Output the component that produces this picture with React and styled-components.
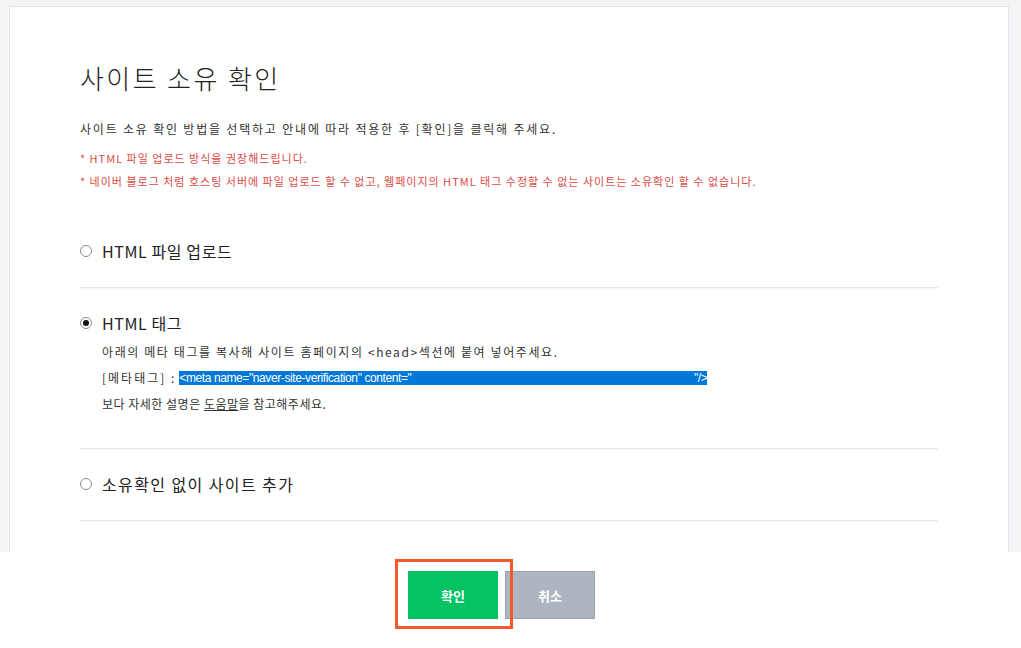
import React, { useState } from "react";
import styled, { createGlobalStyle } from "styled-components";

const GlobalStyle = createGlobalStyle`
  html, body { margin: 0; padding: 0; height: 100%; }
  body {
    font-family: "Noto Sans CJK KR", "Noto Sans", sans-serif;
    color: #333;
    background: #f3f4f6;
  }
  #root { height: 100%; }
`;

const StyledPage = styled.div`
  display: flex;
  flex-direction: column;
  height: 100vh;
`;

const StyledMain = styled.div`
  flex: 1;
  overflow: hidden;
  padding: 6px 12px 0 9px;
  background: #f3f4f6;
`;

const StyledCard = styled.div`
  background: white;
  border: 1px solid #e2e4e7;
  min-height: 700px;
  padding: 55px 70px 0 70px;
`;

const Title = styled.h1`
  margin: 0;
  font-size: 26px;
  line-height: 32px;
  font-weight: 300;
  color: #222;
  letter-spacing: 2.4px;
`;

const Desc = styled.p`
  margin: 27px 0 0;
  font-size: 12px;
  line-height: 16px;
  color: #333;
  letter-spacing: 1.8px;
`;

const NoticeList = styled.ul`
  list-style: none;
  margin: 10px 0 0;
  padding: 0;
`;

const Notice = styled.li`
  font-size: 11px;
  line-height: 23px;
  color: #dc4a45;
  letter-spacing: 1px;
`;

const OptionList = styled.div`
  margin-top: 23px;
`;

const Option = styled.div`
  padding: 24px 0 25px;
  border-bottom: 1px solid #e8e8e8;
  box-shadow: 0 1px 0 #f6f6f6;
`;

const OptionLabel = styled.label`
  display: flex;
  align-items: center;
  gap: 10px;
  font-size: 16px;
  line-height: 22px;
  color: #222;
  cursor: pointer;
  letter-spacing: ${(p) => p.$spacing || "0.6px"};
`;

const Radio = styled.span`
  width: 12px;
  height: 12px;
  box-sizing: border-box;
  border-radius: 50%;
  border: 1px solid #8c8c8c;
  background: white;
  display: flex;
  align-items: center;
  justify-content: center;
  flex-shrink: 0;

  &::after {
    content: "";
    display: ${(p) => (p.$checked ? "block" : "none")};
    width: 6px;
    height: 6px;
    border-radius: 50%;
    background: #111;
  }
`;

const OptionBody = styled.div`
  padding-left: 22px;
  margin: 5px 0 6px;
`;

const BodyLine = styled.p`
  margin: 0;
  font-size: 12px;
  line-height: 26px;
  color: #333;
  letter-spacing: ${(p) => p.$spacing || "1.6px"};
  display: flex;
  align-items: center;
`;

const MetaCode = styled.span`
  display: inline-flex;
  justify-content: space-between;
  width: 528px;
  height: 14px;
  line-height: 14px;
  margin-left: 3px;
  background: #0078d7;
  color: white;
  font-family: "Liberation Sans", Arial, sans-serif;
  font-size: 12px;
  letter-spacing: -0.4px;
`;

const HelpLink = styled.a`
  color: #333;
  text-decoration: underline;
  cursor: pointer;
`;

const StyledFooter = styled.div`
  height: 96px;
  background: white;
  display: flex;
  justify-content: center;
  align-items: flex-start;
  gap: 7px;
  padding: 19px 18px 0 0;
  box-sizing: border-box;
`;

const Button = styled.button`
  width: 90px;
  height: 48px;
  border: 1px solid ${(p) => (p.$primary ? "#03c362" : "#98a2ad")};
  background: ${(p) => (p.$primary ? "#03c362" : "#adb6c0")};
  color: white;
  font-family: "Noto Sans CJK KR", sans-serif;
  font-size: 13px;
  font-weight: 700;
  cursor: pointer;
`;

const Highlighted = styled.div`
  position: relative;

  &::before {
    content: "";
    position: absolute;
    left: -13px;
    top: -12px;
    right: -15px;
    bottom: -10px;
    border: 3px solid #f25a2e;
    pointer-events: none;
  }
`;

const options = [
  { id: "file", label: "HTML 파일 업로드" },
  { id: "tag", label: "HTML 태그" },
  { id: "none", label: "소유확인 없이 사이트 추가", spacing: "1.4px" },
];

export default function App() {
  const [selected, setSelected] = useState("tag");

  return (
    <>
      <GlobalStyle />
      <StyledPage>
        <StyledMain>
          <StyledCard>
            <Title>사이트 소유 확인</Title>
            <Desc>
              사이트 소유 확인 방법을 선택하고 안내에 따라 적용한 후 [확인]을 클릭해 주세요.
            </Desc>
            <NoticeList>
              <Notice>* HTML 파일 업로드 방식을 권장해드립니다.</Notice>
              <Notice>
                * 네이버 블로그 처럼 호스팅 서버에 파일 업로드 할 수 없고, 웹페이지의 HTML 태그 수정할 수 없는 사이트는 소유확인 할 수 없습니다.
              </Notice>
            </NoticeList>
            <OptionList>
              {options.map((item) => (
                <Option key={item.id}>
                  <OptionLabel
                    $spacing={item.spacing}
                    onClick={() => setSelected(item.id)}
                  >
                    <Radio $checked={selected === item.id} />
                    {item.label}
                  </OptionLabel>
                  {item.id === "tag" && (
                    <OptionBody>
                      <BodyLine>
                        아래의 메타 태그를 복사해 사이트 홈페이지의 &lt;head&gt;섹션에 붙여 넣어주세요.
                      </BodyLine>
                      <BodyLine $spacing="2px">
                        [메타태그] :
                        <MetaCode>
                          <span>&lt;meta name="naver-site-verification" content="</span>
                          <span>"/&gt;</span>
                        </MetaCode>
                      </BodyLine>
                      <BodyLine $spacing="0.5px">
                        보다 자세한 설명은&nbsp;<HelpLink>도움말</HelpLink>을 참고해주세요.
                      </BodyLine>
                    </OptionBody>
                  )}
                </Option>
              ))}
            </OptionList>
          </StyledCard>
        </StyledMain>
        <StyledFooter>
          <Highlighted>
            <Button $primary>확인</Button>
          </Highlighted>
          <Button>취소</Button>
        </StyledFooter>
      </StyledPage>
    </>
  );
}
